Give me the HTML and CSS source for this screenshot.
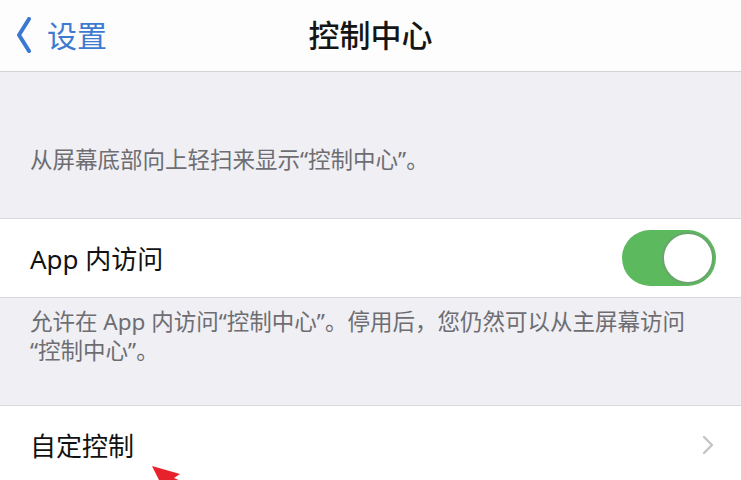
FILE: index.html
```html
<!DOCTYPE html>
<html lang="zh-CN">
<head>
    <meta charset="UTF-8">
    <meta name="viewport" content="width=device-width, initial-scale=1.0">
    <title>控制中心</title>
    <link rel="stylesheet" href="styles.css">
</head>
<body>
    <div class="screen">
        <header class="navbar">
            <a class="back" href="#">
                <svg class="back-icon" width="16" height="36" viewBox="0 0 16 36">
                    <path d="M13 2 L3 18 L13 34" fill="none" stroke="#3a78d4" stroke-width="4" stroke-linecap="round" stroke-linejoin="round"/>
                </svg>
                <span>设置</span>
            </a>
            <h1 class="title">控制中心</h1>
            <div></div>
        </header>

        <div class="group-header">
            <p class="note">从屏幕底部向上轻扫来显示“控制中心”。</p>
        </div>

        <div class="cell">
            <span class="cell-label">App 内访问</span>
            <label class="switch">
                <input type="checkbox" checked>
                <span class="knob"></span>
            </label>
        </div>

        <div class="group-footer">
            <p class="note">允许在 App 内访问“控制中心”。停用后，您仍然可以从主屏幕访问<br>“控制中心”。</p>
        </div>

        <div class="cell">
            <span class="cell-label">自定控制</span>
            <svg class="chevron" width="12" height="20" viewBox="0 0 12 20">
                <path d="M2 2 L10 10 L2 18" fill="none" stroke="#c4c4c8" stroke-width="2.4" stroke-linecap="round" stroke-linejoin="round"/>
            </svg>
        </div>

        <!-- annotation arrow -->
        <svg class="arrow" width="80" height="30" viewBox="0 0 80 30">
            <polygon points="2,2 30,10 24,14 60,30 40,30 18,20 14,26" fill="#e8222c"/>
        </svg>
    </div>
</body>
</html>
```

FILE: styles.css
```css
body {
    margin: 0;
    padding: 0;
    font-family: "Noto Sans", "Noto Sans CJK SC", sans-serif;
    background-color: #efeff4;
    color: #111111;
}

.screen {
    position: relative;
    width: 741px;
    height: 480px;
    overflow: hidden;
}

.navbar {
    height: 67px;
    padding-bottom: 4px;
    display: grid;
    grid-template-columns: 1fr auto 1fr;
    align-items: center;
    background: #fdfdfd;
    border-bottom: 1px solid #d2d2d6;
}

.back {
    display: flex;
    align-items: center;
    gap: 15px;
    padding-left: 16px;
    color: #3d7bd0;
    font-size: 30px;
    text-decoration: none;
}

.back-icon {
    margin-top: 2px;
}

.title {
    margin: 0;
    font-size: 31px;
    font-weight: 500;
    color: #151515;
}

.note {
    margin: 0;
    font-size: 22.5px;
    line-height: 27px;
    color: #6d6d72;
}

.group-header {
    padding: 74px 30px 0;
    height: 72px;
    border-bottom: 1px solid #dadade;
}

.group-footer {
    padding: 9px 30px 0;
    height: 98px;
    border-bottom: 1px solid #dadade;
}

.group-footer .note {
    max-width: 680px;
    line-height: 29px;
}

.cell {
    height: 78px;
    display: flex;
    align-items: center;
    justify-content: space-between;
    padding: 0 25px 0 30px;
    background: #ffffff;
    border-bottom: 1px solid #dadade;
}

.cell-label {
    font-size: 26px;
    color: #111111;
}

.switch {
    position: relative;
    width: 94px;
    height: 56px;
}

.switch input {
    display: none;
}

.knob {
    position: absolute;
    inset: 0;
    border-radius: 28px;
    background: #5cb95e;
}

.knob::after {
    content: "";
    position: absolute;
    top: 2px;
    right: 2px;
    width: 48px;
    height: 48px;
    border-radius: 50%;
    background: #ffffff;
    border: 2px solid #6aa56c;
}

.chevron {
    margin-right: 2px;
}

.arrow {
    position: absolute;
    left: 150px;
    top: 464px;
}
```
